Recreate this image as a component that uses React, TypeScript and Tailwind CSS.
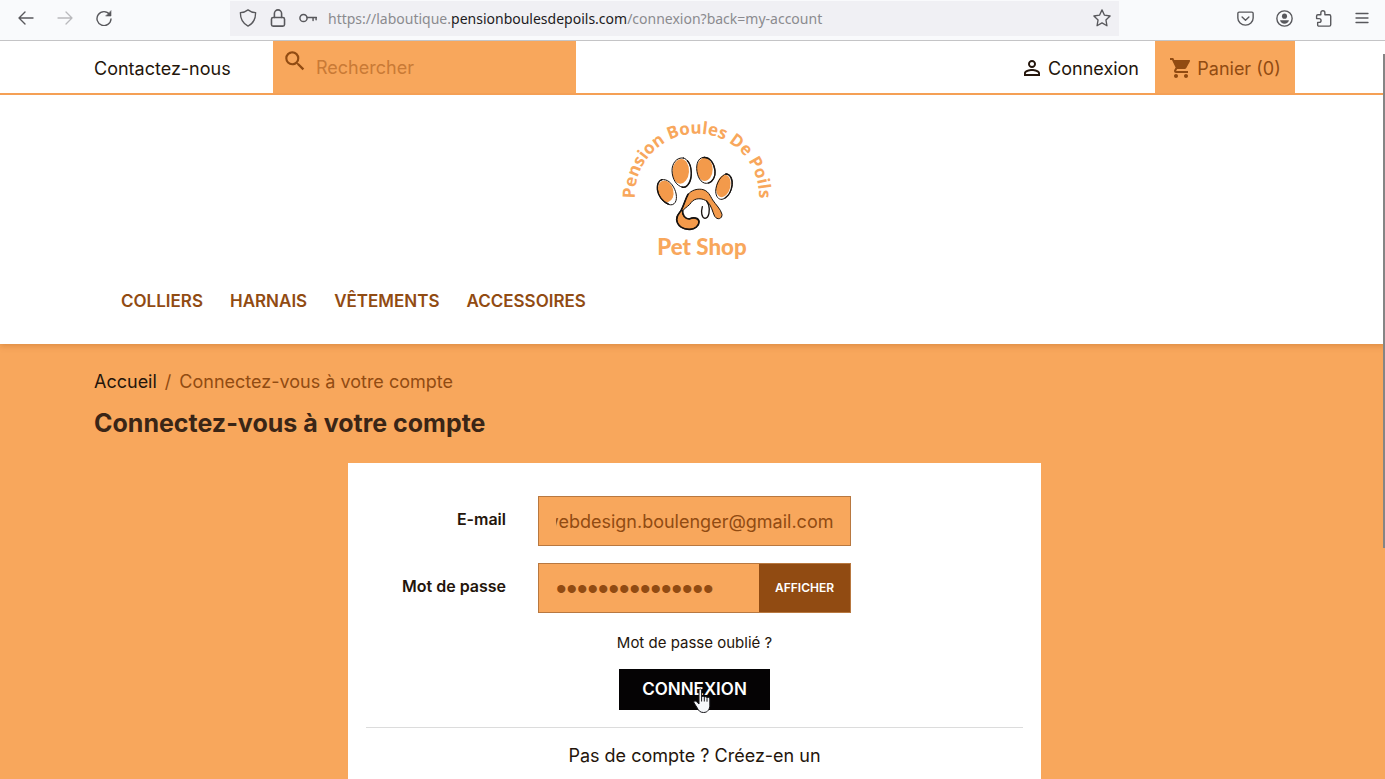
import React, { useEffect, useRef, useState } from "react";
import { MdSearch, MdShoppingCart, MdPersonOutline } from "react-icons/md";

const menuItems = ["Colliers", "Harnais", "Vêtements", "Accessoires"];

const iconProps = {
  viewBox: "0 0 16 16",
  fill: "none",
  stroke: "currentColor",
  strokeLinecap: "round" as const,
  strokeLinejoin: "round" as const,
};

const BrowserBar: React.FC = () => {
  return (
    <div className="flex h-[41px] shrink-0 items-center border-b border-[#c4c4c6] bg-[#f9fafc] pr-[15px] text-[#58585c]">
      <div className="flex w-[230px] shrink-0 items-center gap-[23px] pb-1 pl-[18px]">
        <button aria-label="Page précédente">
          <svg {...iconProps} className="size-4" strokeWidth="1.4">
            <path d="M15 8H1M7 2L1 8l6 6" />
          </svg>
        </button>
        <button aria-label="Page suivante" className="text-[#b9b9bc]">
          <svg {...iconProps} className="size-4" strokeWidth="1.3">
            <path d="M1 8h14M9 2l6 6-6 6" />
          </svg>
        </button>
        <button aria-label="Actualiser">
          <svg {...iconProps} className="size-4" strokeWidth="1.4">
            <path d="M13.6 4.4A7 7 0 1 0 15 9" />
            <path d="M15 1v5h-5z" fill="currentColor" strokeWidth="0.6" />
          </svg>
        </button>
      </div>
      <div className="mb-1 flex h-[35px] min-w-0 max-w-[889px] flex-1 items-center bg-[#f0f0f4] pr-2 pl-[9px]">
        <svg {...iconProps} className="mr-3 h-[18px] w-[18px] shrink-0" strokeWidth="1.2">
          <path d="M8 .8c2 1.6 4.300 2.400 6.800 2.400 0 5.800-2.200 9.800-6.800 12C3.400 13 1.200 9 1.200 3.200 3.700 3.200 6 2.400 8 .8z" />
        </svg>
        <svg {...iconProps} className="mr-3 h-[18px] w-[18px] shrink-0" strokeWidth="1.4">
          <rect x="2.200" y="7.500" width="11.600" height="7.700" rx="1.500" />
          <path d="M4.800 7.500V4a3.200 3.200 0 0 1 6.400 0v3.500" />
        </svg>
        <svg {...iconProps} className="mr-[11px] h-[18px] w-[18px] shrink-0" strokeWidth="1.3">
          <circle cx="4" cy="8" r="3.200" />
          <path d="M7.200 7.500h8.300M12.500 7.500v2.800M15.200 7.500v2" />
        </svg>
        <p className="flex-1 truncate pt-[2px] font-['Noto_Sans'] text-[14px] leading-5 text-[#8b8b8f]">
          https://laboutique.<span className="text-[#1c1b22]">pensionboulesdepoils.com</span>/connexion?back=my-account
        </p>
        <button aria-label="Ajouter aux favoris">
          <svg {...iconProps} className="h-[18px] w-[18px]" strokeWidth="1.2">
            <path d="M8 .8l2.200 4.700 5 .7-3.700 3.500.9 5.200L8 12.400l-4.400 2.500.9-5.200L.8 6.200l5-.7z" />
          </svg>
        </button>
      </div>
      <div className="ml-auto flex items-center gap-[22px] pb-1 pl-4">
        <button aria-label="Pocket">
          <svg {...iconProps} className="h-[17px] w-[17px]" strokeWidth="1.300">
            <path d="M2 2h12c.7 0 1.200.5 1.200 1.200V7.500a7.200 6.700 0 0 1-14.400 0V3.200C.8 2.500 1.300 2 2 2z" />
            <path d="M4.800 6.500L8 9.600l3.200-3.100" />
          </svg>
        </button>
        <button aria-label="Compte">
          <svg {...iconProps} className="h-[17px] w-[17px]" strokeWidth="1.300">
            <circle cx="8" cy="8" r="7.200" />
            <circle cx="8" cy="5.800" r="2.400" fill="currentColor" stroke="none" />
            <path d="M3.800 9.600h8.400c-.5 2-2.100 3.300-4.200 3.300s-3.700-1.300-4.200-3.300z" fill="currentColor" stroke="none" />
          </svg>
        </button>
        <button aria-label="Extensions">
          <svg {...iconProps} className="h-[17px] w-[17px]" strokeWidth="1.300">
            <path d="M5.500 4.500V2.600a1.900 1.900 0 0 1 3.800 0v1.900h4.200c.8 0 1.300.5 1.300 1.300v8.100c0 .8-.5 1.300-1.300 1.300H3.700c-.7 0-1.200-.5-1.200-1.200v-2.300h1.400a1.800 1.800 0 0 0 0-3.600H1.500V5.700c0-.7.500-1.200 1.200-1.200z" />
          </svg>
        </button>
        <button aria-label="Menu">
          <svg {...iconProps} className="h-[16px] w-[16px]" strokeWidth="1.300">
            <path d="M2 3.500h12M2 8h12M2 12.500h12" />
          </svg>
        </button>
      </div>
    </div>
  );
};

const Logo: React.FC = () => {
  return (
    <svg viewBox="0 0 570 495" className="h-[165px] w-[190px]" role="img" aria-label="Pension Boules De Poils Pet Shop">
      <defs>
        <path id="logo-arc" d="M105 300V272A186 186 0 0 1 477 272V300" />
      </defs>
      <text fill="#f8a75c" fontFamily="'Open Sans', sans-serif" fontWeight="700" fontSize="51" textAnchor="middle">
        <textPath href="#logo-arc" startOffset="50%">
          Pension Boules De Poils
        </textPath>
      </text>
      <g fill="#f39a4b">
        <ellipse cx="197" cy="259" rx="23" ry="33" transform="rotate(-14 197 259)" />
        <ellipse cx="242" cy="199" rx="25" ry="37" transform="rotate(4 242 199)" />
        <ellipse cx="314" cy="193" rx="24" ry="35" />
        <ellipse cx="370" cy="243" rx="21" ry="34" transform="rotate(14 370 243)" />
      </g>
      <g fill="none" stroke="#17120f" strokeWidth="4" strokeLinecap="round">
        <path d="M186 224c-16 4-17 28-9 46 9 20 27 32 40 29 15-5 15-28 7-46-8-19-23-32-38-29z" strokeWidth="3" />
        <path d="M205 297c-16-5-31-25-33-43-1-15 3-26 13-30" />
        <path d="M250 159c-21-3-34 17-34 38 1 27 14 46 33 50 16 2 26-19 25-42-1-26-10-43-24-46z" strokeWidth="3" />
        <path d="M262 167c15 14 16 55 1 73-5 6-11 8-17 6" />
        <path d="M314 157c-16-1-24 13-24 33 1 26 13 45 29 45 17-1 27-17 26-36-2-24-14-41-31-42z" strokeWidth="3" />
        <path d="M309 158c19-4 33 15 36 39 2 16-6 33-19 37" />
        <path d="M378 207c-15 2-31 31-31 52 1 16 8 25 19 24 17-3 30-25 31-45 1-18-6-32-19-31z" strokeWidth="3" />
        <path d="M378 207c13 0 20 18 18 33-2 17-10 32-21 39" />
        <path
          d="M243 317C252 300 256 282 264 268C274 256 290 251 305 253C325 256 330 272 338 285C348 300 362 312 366 328C367 342 352 346 344 334C338 322 334 300 322 290C308 278 284 278 274 292C268 302 258 306 248 317C246 330 256 342 268 342C280 336 296 338 297 350C297 364 284 372 270 373C250 374 232 364 230 344C230 330 236 326 243 317Z"
          fill="#f39a4b"
          strokeWidth="3"
        />
        <path d="M248 317C246 330 256 342 268 342C280 336 296 338 297 350C297 364 284 372 270 373C250 374 232 364 230 344C230 330 236 326 243 317C252 300 256 282 264 268" strokeWidth="5" />
        <path d="M307 305C303 320 304 338 315 340C328 338 330 315 326 300L320 288" />
      </g>
      <text x="306" y="450" fill="#f8a75c" fontFamily="Lato, sans-serif" fontWeight="900" fontSize="67" textAnchor="middle">
        Pet Shop
      </text>
    </svg>
  );
};

const TopNav: React.FC = () => {
  return (
    <nav className="border-b-2 border-[#f5a055] bg-white pl-1">
      <div className="mx-auto flex h-[52px] w-full max-w-[1201px] text-[18px] text-[#24150b]">
        <a href="#contact" className="flex w-[179px] shrink-0 items-center pt-[2px]">
          Contactez-nous
        </a>
        <form role="search" className="flex w-[303px] bg-[#f8a75c]" onSubmit={(e) => e.preventDefault()}>
          <button aria-label="Lancer la recherche" className="self-start pt-[7px] pl-[9px] text-[#914b12]">
            <MdSearch className="size-[26px]" />
          </button>
          <input
            type="search"
            aria-label="Rechercher"
            placeholder="Rechercher"
            className="min-w-0 flex-1 bg-transparent px-2 outline-none placeholder:text-[#c97a36]"
          />
        </form>
        <div className="ml-auto flex">
          <a href="#connexion" className="flex items-center gap-1 pt-[2px] pr-4">
            <MdPersonOutline className="size-6" />
            Connexion
          </a>
          <a href="#panier" className="flex w-[140px] items-center justify-center gap-1 bg-[#f8a75c] pt-[2px] text-[#914b12]">
            <MdShoppingCart className="size-6" />
            Panier (0)
          </a>
        </div>
      </div>
    </nav>
  );
};

const LoginForm: React.FC = () => {
  const [email, setEmail] = useState("webdesign.boulenger@gmail.com");
  const [password, setPassword] = useState("motdepasse12345");
  const [isVisible, setIsVisible] = useState(false);
  const emailRef = useRef<HTMLInputElement>(null);

  // keep the end of a long address in view
  useEffect(() => {
    if (emailRef.current) {
      emailRef.current.scrollLeft = emailRef.current.scrollWidth;
    }
  }, []);

  return (
    <section className="mx-auto mt-[22px] w-full max-w-[693px] bg-white px-[18px] pt-[33px] pb-10 text-[#24150b]">
      <form onSubmit={(e) => e.preventDefault()}>
        <div className="mb-[17px] flex">
          <label htmlFor="email" className="mr-8 w-[140px] pt-[13px] text-right text-[16px] leading-5 font-semibold">
            E-mail
          </label>
          <input
            id="email"
            ref={emailRef}
            type="text"
            value={email}
            onChange={(e) => setEmail(e.target.value)}
            className="h-[50px] w-[313px] border border-[#b87840] bg-[#f8a75c] px-[17px] text-[18px] text-[#914b12] outline-none"
          />
        </div>
        <div className="flex">
          <label htmlFor="password" className="mr-8 w-[140px] pt-[13px] text-right text-[16px] leading-5 font-semibold">
            Mot de passe
          </label>
          <div className="flex h-[50px] w-[313px] border border-[#b87840] bg-[#f8a75c]">
            <input
              id="password"
              type={isVisible ? "text" : "password"}
              value={password}
              onChange={(e) => setPassword(e.target.value)}
              className={
                "min-w-0 flex-1 bg-transparent pl-[17px] text-[#914b12] outline-none " +
                (isVisible ? "text-[18px]" : "font-['Liberation_Sans'] text-[30px]")
              }
            />
            <button
              type="button"
              className="w-[91px] bg-[#914b12] text-[12px] font-semibold text-white uppercase"
              onClick={() => setIsVisible(!isVisible)}
            >
              Afficher
            </button>
          </div>
        </div>
        <div className="mt-[19px] text-center leading-5">
          <a href="#oubli" className="text-[15px]">
            Mot de passe oublié ?
          </a>
        </div>
        <div className="mt-4 flex justify-center">
          <button type="submit" className="relative h-[41px] w-[151px] bg-[#050304] text-[17px] font-semibold text-white uppercase">
            Connexion
            <svg viewBox="0 0 20 26" className="absolute top-[19px] left-[74px] h-[26px] w-[20px]" aria-hidden="true">
              <path
                d="M6 2c0-1.300 2.600-1.300 2.600 0v7c.3-1.200 2.700-1.100 2.700.4.400-1 2.600-.9 2.700.6.500-.9 2.800-.7 2.800.8v6.400c0 4-2 7.300-6.200 7.300-3.600 0-5-1.800-6.300-4.500L1 14.800c-.8-1.500 1-2.500 2.300-1.300L6 16z"
                fill="#f5f7fa"
                stroke="#17171b"
                strokeWidth="1"
              />
              <path d="M8.600 9v4.500M11.300 9.500v4M14 10.200v3.500" stroke="#17171b" strokeWidth="1" />
            </svg>
          </button>
        </div>
      </form>
      <hr className="mt-[17px] border-[#dcdcdc]" />
      <div className="mt-4 text-center">
        <a href="#inscription" className="text-[18px] leading-6">
          Pas de compte ? Créez-en un
        </a>
      </div>
    </section>
  );
};

const App: React.FC = () => {
  return (
    <div className="relative flex h-screen flex-col overflow-hidden bg-[#f8a75c] font-[Inter,sans-serif]">
      <BrowserBar />
      <div className="min-h-0 flex-1 overflow-hidden">
        <header className="relative bg-white shadow-[0_2px_6px_rgba(160,80,10,0.3)]">
          <TopNav />
          <div className="flex justify-center pt-[10px] pl-1">
            <a href="#accueil">
              <Logo />
            </a>
          </div>
          <div className="pl-1">
            <ul className="mx-auto flex w-full max-w-[1201px] gap-[27px] pt-[19px] pb-[31px] pl-[27px]">
              {menuItems.map((item) => (
                <li key={item}>
                  <a href={"#" + item.toLowerCase()} className="text-[17px] leading-6 font-semibold text-[#914b12] uppercase">
                    {item}
                  </a>
                </li>
              ))}
            </ul>
          </div>
        </header>

        <main className="pt-[26px] pl-1">
          <div className="mx-auto w-full max-w-[1201px]">
            <nav aria-label="Fil d'Ariane" className="flex gap-2 text-[18px] leading-6 text-[#914b12]">
              <a href="#accueil" className="text-[#24150b]">
                Accueil
              </a>
              <span>/</span>
              <span>Connectez-vous à votre compte</span>
            </nav>
            <h1 className="mt-3 text-[25px] leading-[35px] font-bold text-[#3a2516]">Connectez-vous à votre compte</h1>
            <LoginForm />
          </div>
        </main>
      </div>

      {/* Scrollbar thumb */}
      <div className="absolute top-[54px] right-0 h-[494px] w-[2px] bg-[#858585]" />
    </div>
  );
};

export default App;
